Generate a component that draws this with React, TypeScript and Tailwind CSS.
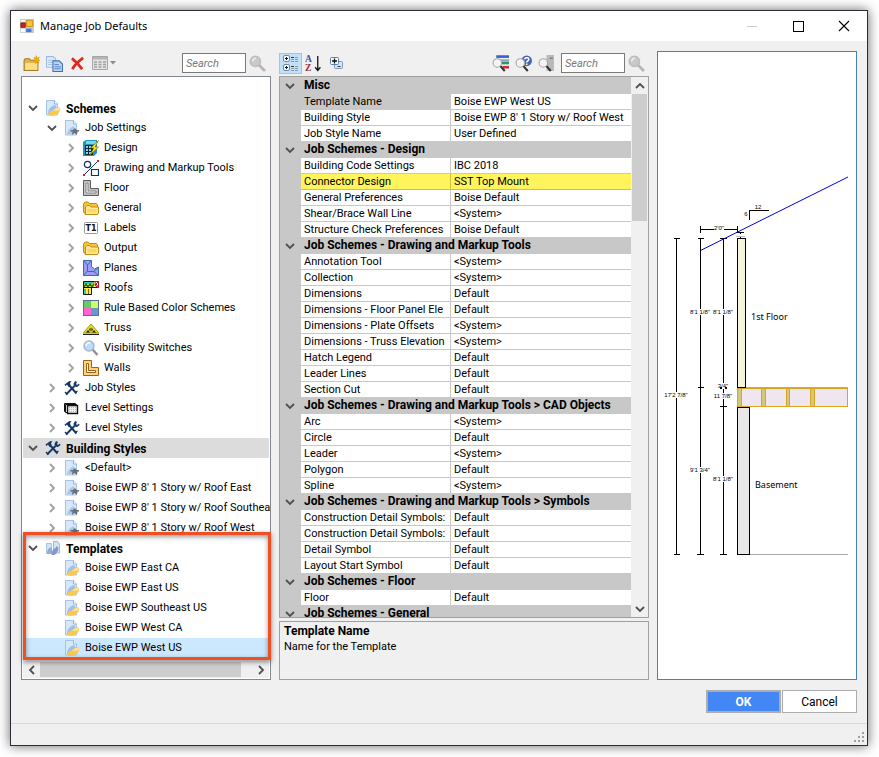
import { useState, type ReactNode } from "react";

type IconName =
  | "schemes"
  | "settings"
  | "design"
  | "drawing"
  | "floor"
  | "folder"
  | "labels"
  | "planes"
  | "roofs"
  | "colors"
  | "truss"
  | "lens"
  | "walls"
  | "tools"
  | "levels"
  | "templates";

interface TreeItem {
  label: string;
  icon: IconName;
  level: 0 | 1 | 2;
  state?: "open" | "closed";
}

const TREE: TreeItem[] = [
  { label: "Schemes", icon: "schemes", level: 0, state: "open" },
  { label: "Job Settings", icon: "settings", level: 1, state: "open" },
  { label: "Design", icon: "design", level: 2, state: "closed" },
  { label: "Drawing and Markup Tools", icon: "drawing", level: 2, state: "closed" },
  { label: "Floor", icon: "floor", level: 2, state: "closed" },
  { label: "General", icon: "folder", level: 2, state: "closed" },
  { label: "Labels", icon: "labels", level: 2, state: "closed" },
  { label: "Output", icon: "folder", level: 2, state: "closed" },
  { label: "Planes", icon: "planes", level: 2, state: "closed" },
  { label: "Roofs", icon: "roofs", level: 2, state: "closed" },
  { label: "Rule Based Color Schemes", icon: "colors", level: 2, state: "closed" },
  { label: "Truss", icon: "truss", level: 2, state: "closed" },
  { label: "Visibility Switches", icon: "lens", level: 2, state: "closed" },
  { label: "Walls", icon: "walls", level: 2, state: "closed" },
  { label: "Job Styles", icon: "tools", level: 1, state: "closed" },
  { label: "Level Settings", icon: "levels", level: 1, state: "closed" },
  { label: "Level Styles", icon: "tools", level: 1, state: "closed" },
  { label: "Building Styles", icon: "tools", level: 0, state: "open" },
  { label: "<Default>", icon: "settings", level: 1, state: "closed" },
  { label: "Boise EWP 8' 1 Story w/ Roof East", icon: "settings", level: 1, state: "closed" },
  { label: "Boise EWP 8' 1 Story w/ Roof Southea", icon: "settings", level: 1, state: "closed" },
  { label: "Boise EWP 8' 1 Story w/ Roof West", icon: "settings", level: 1, state: "closed" },
];

const TEMPLATES: TreeItem[] = [
  { label: "Templates", icon: "templates", level: 0, state: "open" },
  { label: "Boise EWP East CA", icon: "schemes", level: 1 },
  { label: "Boise EWP East US", icon: "schemes", level: 1 },
  { label: "Boise EWP Southeast US", icon: "schemes", level: 1 },
  { label: "Boise EWP West CA", icon: "schemes", level: 1 },
  { label: "Boise EWP West US", icon: "schemes", level: 1 },
];

const PROPERTIES: { title: string; rows: [string, string][] }[] = [
  {
    title: "Misc",
    rows: [
      ["Template Name", "Boise EWP West US"],
      ["Building Style", "Boise EWP 8' 1 Story w/ Roof West"],
      ["Job Style Name", "User Defined"],
    ],
  },
  {
    title: "Job Schemes - Design",
    rows: [
      ["Building Code Settings", "IBC 2018"],
      ["Connector Design", "SST Top Mount"],
      ["General Preferences", "Boise Default"],
      ["Shear/Brace Wall Line", "<System>"],
      ["Structure Check Preferences", "Boise Default"],
    ],
  },
  {
    title: "Job Schemes - Drawing and Markup Tools",
    rows: [
      ["Annotation Tool", "<System>"],
      ["Collection", "<System>"],
      ["Dimensions", "Default"],
      ["Dimensions - Floor Panel Ele", "Default"],
      ["Dimensions - Plate Offsets", "<System>"],
      ["Dimensions - Truss Elevation", "<System>"],
      ["Hatch Legend", "Default"],
      ["Leader Lines", "Default"],
      ["Section Cut", "Default"],
    ],
  },
  {
    title: "Job Schemes - Drawing and Markup Tools > CAD Objects",
    rows: [
      ["Arc", "<System>"],
      ["Circle", "Default"],
      ["Leader", "<System>"],
      ["Polygon", "Default"],
      ["Spline", "<System>"],
    ],
  },
  {
    title: "Job Schemes - Drawing and Markup Tools > Symbols",
    rows: [
      ["Construction Detail Symbols:", "Default"],
      ["Construction Detail Symbols:", "Default"],
      ["Detail Symbol", "Default"],
      ["Layout Start Symbol", "Default"],
    ],
  },
  { title: "Job Schemes - Floor", rows: [["Floor", "Default"]] },
  { title: "Job Schemes - General", rows: [] },
];

function Svg({ children, className = "size-4" }: { children: ReactNode; className?: string }) {
  return (
    <svg viewBox="0 0 16 16" className={`${className} shrink-0`} fill="none" aria-hidden="true">
      {children}
    </svg>
  );
}

function Chevron({ dir, className = "text-[#505050]" }: { dir: "down" | "up" | "left" | "right"; className?: string }) {
  const paths = {
    down: "M1 3l4 4 4-4",
    up: "M1 7l4-4 4 4",
    left: "M7 1 3 5l4 4",
    right: "M3 1l4 4-4 4",
  };
  return (
    <svg viewBox="0 0 10 10" className={`size-2.5 shrink-0 ${className}`} fill="none" aria-hidden="true">
      <path d={paths[dir]} stroke="currentColor" strokeWidth="1.8" />
    </svg>
  );
}

function Page() {
  return (
    <>
      <path d="M1.5.5h8l3 3.5v11h-11z" fill="#d6e8fa" stroke="#a5c3e6" />
      <path d="M9.500.5v3.500h3" fill="#fff" stroke="#8fb4df" />
    </>
  );
}

function TreeIcon({ name }: { name: IconName }) {
  switch (name) {
    case "schemes":
      return (
        <Svg>
          <Page />
          <path d="M3 14c0-5 3-8 7-9l2 3-6 7z" fill="#9dc0ee" />
          <path d="M3.500 15c0-3 2-4 4.500-4.500l2.500-2.500 4.500-.5c.5 2-.5 5-2.500 6.500L7 16z" fill="#fbc84a" />
          <path d="m8 11 3-2.800 4-.7-1 3z" fill="#fde0a4" />
        </Svg>
      );
    case "settings":
      return (
        <Svg>
          <Page />
          <path d="M3 14c1-5 4-6 6-8l2 2-2 6z" fill="#a9c9ee" />
          <path d="M6.500 10H9l1-1.500h1.500l1 1.500H15v1.500h-1.500l-.5 3.500-2.500-2-2.500 2 .5-3.500h-2z" fill="#6b7077" />
        </Svg>
      );
    case "design":
      return (
        <Svg>
          <path d="M0 2 3 0h11v13l-3 3H0z" fill="#2493b5" />
          <path d="M3 1h10v3H3z" fill="#6fd9ef" />
          <path d="M2 5h8v10H2z" fill="#12232d" />
          <path d="M3 6h2v2H3zm3 0h2v2H6zM3 9h2v2H3zm3 0h2v2H6zM3 12h2v2H3zm3 0h2v2H6z" fill="#8ccfe4" />
          <path d="M15.500.5 7.500 8H11l-4.500 7.500 9-8.500H12z" fill="#ffee00" stroke="#7c6a00" strokeWidth=".6" />
        </Svg>
      );
    case "drawing":
      return (
        <Svg>
          <circle cx="4.500" cy="4.500" r="3.200" stroke="#10365f" strokeWidth="1.200" />
          <path d="M8.500 9.500h7v6h-7z" stroke="#10365f" strokeWidth="1.200" />
          <path d="M1.500 14.500 14.500 1.500" stroke="#10365f" />
          <path d="M0 14h2v2H0zM14 0h2v2h-2z" fill="#d81e1e" />
        </Svg>
      );
    case "floor":
      return (
        <Svg>
          <path d="M.5.5h7v8h8v7H.5z" fill="#c4c4c4" stroke="#5c5c5c" />
          <path d="M3 3h2v8h8v2H3z" fill="#eee" stroke="#777" strokeWidth=".8" />
        </Svg>
      );
    case "folder":
      return (
        <Svg>
          <path d="M.5 12V4L2 2h3l1.500 1.500h7l1 1.500v9.500H2.500z" fill="#f7c33a" stroke="#c58a12" />
          <path d="M2.500 14.500V7L4 5.500h3L8 7h7.500v6L14 14.500z" fill="#ffeb99" stroke="#c58a12" />
          <path d="M4.500 9h9v3.500h-9z" fill="#fbd662" />
        </Svg>
      );
    case "labels":
      return (
        <svg viewBox="0 0 16 16" className="size-4 shrink-0" aria-hidden="true">
          <rect x="1.500" y="2.500" width="13" height="11" rx="1" fill="#fff" stroke="#9a9a9a" />
          <text x="8" y="11" textAnchor="middle" fontSize="8" fontWeight="700" fontFamily="DejaVu Sans, sans-serif" fill="#111">
            T1
          </text>
        </svg>
      );
    case "planes":
      return (
        <Svg>
          <path d="M.5.5h8v6l3 2.500 4-2v8.500H.5z" fill="#9a9cf6" stroke="#3a6ea5" />
          <path d="m1 1 3.500 4L8 1M4.500 5v6L1 15M4.500 11.500H11l4-4M11 11.500l4 3.500" stroke="#3a6ea5" />
        </Svg>
      );
    case "roofs":
      return (
        <Svg>
          <path d="M.5 1.500h15v6h-7v7h-8z" fill="#ffe94a" stroke="#111" />
          <path d="M1 2h10v2H1z" fill="#35c6b8" />
          <path d="m1 7 2-3 2 3 2-3 2 3 2-3" stroke="#14702a" strokeWidth="1.500" />
          <path d="M1 7.500h9" stroke="#111" />
          <path d="M11.500 1.500h4v6z" fill="#fff" stroke="#b3122a" />
          <path d="m15 2-3 3 3 3" stroke="#b3122a" />
          <path d="M1 9h2v5H1z" fill="#35c6b8" />
          <path d="M5.500 9v5" stroke="#8c6c00" />
        </Svg>
      );
    case "colors":
      return (
        <Svg>
          <path d="M0 0h16v16H0z" fill="#5c6c9c" />
          <path d="M1 1h7v7H1z" fill="#66cc66" />
          <path d="M8 1h7v7H8z" fill="#ccff66" />
          <path d="M1 8h7v7H1z" fill="#ff66cc" />
          <path d="M8 8h7v7H8z" fill="#6699cc" />
        </Svg>
      );
    case "truss":
      return (
        <Svg>
          <path d="M8 4 15.500 12.500H.5z" fill="#e8dc1e" stroke="#8d8600" strokeWidth=".8" />
          <path d="M0 12.500h16v2H0z" fill="#d6cc10" />
          <path d="M0 14.500h16" stroke="#222" />
          <path d="M3 12.500 5 10l2 2.500zM9 12.500l2-2.500 2 2.500zM6 9.500l1.500-2v4zM10 9.500l-1.500-2v4z" fill="#1c1c1c" />
        </Svg>
      );
    case "lens":
      return (
        <Svg>
          <path d="m9.500 9.500 5 5.500" stroke="#8d8d96" strokeWidth="2.400" />
          <circle cx="6" cy="6" r="5" fill="#b9dcfa" stroke="#a9b6cc" strokeWidth="1.500" />
          <path d="M3 6a3 3 0 0 1 4-3" stroke="#fff" strokeWidth="1.500" />
        </Svg>
      );
    case "walls":
      return (
        <Svg>
          <path d="M.5.5h8v7h7v8H.5z" fill="#ffd27a" stroke="#9a6420" />
          <path d="M3.500 3.500h2v7h7v2h-9z" fill="#fff" stroke="#9a6420" />
        </Svg>
      );
    case "tools":
      return (
        <Svg>
          <path d="m5 5 7.500 8.500M10.500 6 2 14.500" stroke="#123764" strokeWidth="1.900" />
          <path d="M.5 4.500 5.500 1l2 .5L6 3l.5 2L4.500 7 3 4.500 1.500 6z" fill="#123764" />
          <path d="M11 1 9.500 4l1 2.500 2.500.5 2.500-2-.5-1.500L13 5l-1-1 1-2z" fill="#123764" />
          <path d="m11 12.500 2.500-1.500M1 12l2.500 2.500" stroke="#123764" strokeWidth="1.400" />
        </Svg>
      );
    case "levels":
      return (
        <Svg>
          <path d="M.5 3.500h11v8H.5z" fill="#fff" stroke="#111" />
          <path d="M1.500 4.500h11v8h-11z" fill="#fff" stroke="#111" />
          <path d="M3.500 5.500h10v8h-10z" fill="#eee" stroke="#111" strokeWidth="1.400" />
          <path d="M5 7.500h7M5 9.500h7M5 11.500h7" stroke="#bbb" strokeDasharray="1 1" />
        </Svg>
      );
    case "templates":
      return (
        <Svg>
          <path d="M1.500 3.500h5v10h-5z" fill="#d3e4f7" stroke="#a9c3e4" />
          <path d="M8.500 1.500h4L14.500 4v9h-6z" fill="#d3e4f7" stroke="#9db9e0" />
          <path d="M2 14c0-4 1.500-6 3.500-7l1.500 2v4.500z" fill="#93abd9" />
          <path d="M6.500 15c0-4 1.500-6 4-7l1-2 2 2-1 4-3 3z" fill="#8199cb" />
        </Svg>
      );
  }
}

function TreeRow({ item, tone = "", onSelect }: { item: TreeItem; tone?: string; onSelect?: () => void }) {
  const indent = ["pl-[5px]", "pl-6", "pl-[43px]"][item.level];
  return (
    <li
      role="treeitem"
      aria-expanded={item.state ? item.state === "open" : undefined}
      onClick={onSelect}
      className={`flex h-5 cursor-default items-center ${indent} ${tone}`}
    >
      <span className="mr-[7px] flex w-2.5 shrink-0">
        {item.state === "open" && <Chevron dir="down" />}
        {item.state === "closed" && <Chevron dir="right" className="text-[#a0a0a0]" />}
      </span>
      <TreeIcon name={item.icon} />
      <span className={`ml-[5px] pt-px whitespace-nowrap ${item.level === 0 ? "text-[12px] font-bold" : ""}`}>
        {item.label}
      </span>
    </li>
  );
}

function SearchBox({ label }: { label: string }) {
  return (
    <div className="flex items-center gap-[3px]">
      <input
        type="text"
        aria-label={label}
        placeholder="Search"
        className="h-5 w-16 border border-[#7a7a7a] bg-white px-[3px] text-[11px] italic outline-none placeholder:text-[#777]"
      />
      <button aria-label={`Run ${label}`} className="flex">
        <Svg className="size-[17px]">
          <path d="m9.500 9.500 5.500 5.500" stroke="#b4b4b4" strokeWidth="2.500" />
          <circle cx="6" cy="6" r="4.800" fill="#c9c9c9" stroke="#bdbdbd" strokeWidth="1.500" />
          <path d="M3.500 6a3 3 0 0 1 3-3" stroke="#eee" strokeWidth="1.400" />
        </Svg>
      </button>
    </div>
  );
}

function LensOver({ children }: { children: ReactNode }) {
  return (
    <Svg className="size-[17px]">
      {children}
      <circle cx="5" cy="7.500" r="4" fill="#f4f4f4" stroke="#a3a3a3" />
      <path d="m8 10.500 4 4.500" stroke="#333" strokeWidth="2" />
    </Svg>
  );
}

function TreePanel() {
  const [selected, setSelected] = useState("Boise EWP West US");
  return (
    <section className="flex w-[250px] shrink-0 flex-col">
      <div className="flex h-[25px] items-center pb-px pl-0.5">
        <button aria-label="New scheme" className="mr-1.5 flex">
          <Svg className="size-[17px]">
            <path d="M1 14.500V5l1-1.500h4L7.500 5H14v9.500z" fill="#e0b446" stroke="#a57c22" />
            <path d="M2 7.500h11.500V14H2z" fill="#fbe08a" />
            <path d="M10.500 2 12 3l.5-2.500L13 3l2.500-1L14 4l2 1-2 .5 1 2-2-1-1 1.500V5.500L9.500 5l1.500-1z" fill="#f6b400" stroke="#d98f00" strokeWidth=".5" />
          </Svg>
        </button>
        <button aria-label="Copy scheme" className="mr-[7px] flex">
          <Svg className="size-[17px]">
            <path d="M.5 1.500h6l2.500 2v8H.5z" fill="#e3eefb" stroke="#9dbbe2" />
            <path d="M2 5h5M2 7h5M2 9h4" stroke="#a9c3e6" />
            <path d="M6.500 5.500h6l3 3v7h-9z" fill="#b9d3f3" stroke="#4470b8" />
            <path d="M8 9h4M8 11h6M8 13h6" stroke="#5f88c8" />
          </Svg>
        </button>
        <button aria-label="Delete scheme" className="mr-[7px] flex">
          <Svg className="size-[15px]">
            <path d="M2 2.500c4 3 8 7 11 11.500M14 2C10 5 5 9 2.500 14" stroke="#e0281c" strokeWidth="2.900" />
          </Svg>
        </button>
        <button aria-label="View options" className="flex items-center gap-0.5">
          <Svg>
            <path d="M.5 1.500h15v13H.5z" fill="#e4e4e4" stroke="#a6a6a6" />
            <path d="M1 2h14v2.500H1z" fill="#b5b5b5" />
            <path d="M2 7h3m1.500 0h3M11 7h3M2 9.500h3m1.500 0h3m1.500 0h3M2 12h3m1.500 0h3m1.500 0h3" stroke="#a0a0a0" strokeWidth="1.300" />
          </Svg>
          <svg viewBox="0 0 6 4" className="h-1 w-1.5" aria-hidden="true">
            <path d="M0 0h6L3 3.500z" fill="#8c8c8c" />
          </svg>
        </button>
        <div className="mr-[5px] ml-auto">
          <SearchBox label="search schemes" />
        </div>
      </div>

      <div className="flex flex-1 flex-col border border-[#828790] bg-white px-px pt-[21px] pb-px">
        <ul role="tree" aria-label="Schemes">
          {TREE.map((item) => (
            <TreeRow key={item.label} item={item} tone={item.label === "Building Styles" ? "bg-[#dcdcdc]" : ""} />
          ))}
        </ul>
        <div className="relative">
          <ul role="tree" aria-label="Templates">
            {TEMPLATES.map((item) => (
              <TreeRow
                key={item.label}
                item={item}
                tone={item.label === selected ? "bg-[#cce8ff]" : ""}
                onSelect={() => setSelected(item.label)}
              />
            ))}
          </ul>
          {/* callout around the template group */}
          <div className="pointer-events-none absolute -top-1.5 -right-0.5 -bottom-0.5 left-0 border-3 border-[#f04e23] shadow-[0_2px_5px_rgba(0,0,0,0.45),inset_0_2px_5px_rgba(0,0,0,0.4)]" />
        </div>
        <div className="mt-auto flex h-[17px] items-center bg-[#f0f0f0]">
          <button aria-label="Scroll left" className="flex w-[17px] justify-center">
            <Chevron dir="left" />
          </button>
          <div className="flex h-full flex-1">
            <div className="h-[15px] w-[95%] self-center bg-[#cdcdcd]" />
          </div>
          <button aria-label="Scroll right" className="flex w-[17px] justify-center">
            <Chevron dir="right" />
          </button>
        </div>
      </div>
    </section>
  );
}

function PropertyRow({ name, value }: { name: string; value: string }) {
  const marked = name === "Connector Design";
  const active = name === "Template Name";
  const line = marked ? "border-[#cfc436] bg-[#fff45c]" : "border-[#c8c8c8]";
  return (
    <tr className="h-4 leading-[14px]">
      <td className="bg-[#c8c8c8] p-0" />
      <th
        scope="row"
        className={`border-r border-b p-0 pt-px pl-[3px] text-left font-normal whitespace-nowrap ${line} ${active ? "bg-[#c8c8c8]" : ""}`}
      >
        {name}
      </th>
      <td className={`border-b p-0 pt-px pl-[3px] whitespace-nowrap ${line}`}>{value}</td>
    </tr>
  );
}

function PropertyPanel() {
  return (
    <section className="flex min-w-0 flex-1 flex-col">
      <div className="flex h-[25px] items-center pb-px">
        <button
          aria-label="Categorized"
          aria-pressed="true"
          className="mr-[3px] flex h-[21px] w-[23px] items-center justify-center border border-[#90c8f6] bg-[#c2e0f7]"
        >
          <Svg>
            <rect x=".5" y=".5" width="6" height="6" rx="1.500" fill="#fff" stroke="#6688aa" />
            <rect x=".5" y="9.500" width="6" height="6" rx="1.500" fill="#fff" stroke="#6688aa" />
            <path d="M2 3.500h3M3.500 2v3M2 12.500h3M3.500 11v3" stroke="#111" />
            <path d="M8 2.500h3M8 11.500h3" stroke="#333" />
            <path d="M8 4.500h3M8 6.500h3M8 13.500h3M8 15.500h3M12 2.500h3M12 4.500h3M12 6.500h3M12 11.500h3M12 13.500h3M12 15.500h3" stroke="#8a9aaa" />
          </Svg>
        </button>
        <button aria-label="Alphabetical" className="mr-[7px] flex">
          <svg viewBox="0 0 16 16" className="size-[17px]" fill="none" aria-hidden="true">
            <text x="0" y="7" fontSize="9" fontWeight="700" fontFamily="Liberation Serif, serif" fill="#2f55a8">
              A
            </text>
            <text x="0" y="15" fontSize="9" fontWeight="700" fontFamily="Liberation Serif, serif" fill="#a32b2b">
              Z
            </text>
            <path d="M12 1v13M9.500 11.500 12 14.500l2.500-3" stroke="#111" strokeWidth="1.200" />
          </svg>
        </button>
        <button aria-label="Expand all" className="flex">
          <Svg>
            <rect x="5.500" y="6.500" width="8" height="7" rx="1" fill="#d8e6f5" stroke="#7a97b8" />
            <rect x="1.500" y="2.500" width="8" height="7" rx="1" fill="#f5faff" stroke="#5c7fa8" />
            <path d="M3 6h5M5.500 3.500v5" stroke="#111" strokeWidth="1.300" />
            <path d="M8.500 11.500h3" stroke="#333" />
          </Svg>
        </button>
        <div className="mr-1 ml-auto flex items-center gap-1.5">
          <button aria-label="Find in list" className="flex">
            <LensOver>
              <path d="M4 1.500h12" stroke="#3b62c8" strokeWidth="2.500" />
              <path d="M8 5h8" stroke="#8fa4d8" strokeWidth="2" />
              <path d="M9 7.500h7" stroke="#2f9a57" strokeWidth="2.500" />
              <path d="M10 11.500h6" stroke="#c83232" strokeWidth="2.500" />
            </LensOver>
          </button>
          <button aria-label="Find usage" className="flex">
            <LensOver>
              <circle cx="11" cy="5.500" r="5" fill="#4864b4" />
              <path d="M9 4c.5-2 4-2 4 0 0 1.500-2 1.500-2 3M11 8v1.300" stroke="#fff" strokeWidth="1.400" />
            </LensOver>
          </button>
          <button aria-label="Find on page" className="flex">
            <LensOver>
              <path d="M8 0h7v15H8z" fill="#b9b9b9" />
              <path d="M11 3h3" stroke="#666" />
            </LensOver>
          </button>
          <SearchBox label="search properties" />
        </div>
      </div>

      <div className="flex min-h-0 flex-1 basis-0 overflow-hidden border border-[#a0a0a0] bg-[#f0f0f0]">
        <div className="min-w-0 flex-1 basis-0 overflow-hidden bg-[#c8c8c8] pt-px">
          <table className="w-full table-fixed border-separate border-spacing-0 bg-white leading-[15px]">
            <colgroup>
              <col className="w-[21px]" />
              <col className="w-[150px]" />
              <col />
            </colgroup>
            {PROPERTIES.map((group) => (
              <tbody key={group.title}>
                <tr className="h-4 bg-[#c8c8c8]">
                  <td className="p-0">
                    <Chevron dir="down" className="ml-[5px] text-[#505050]" />
                  </td>
                  <th colSpan={2} scope="colgroup" className="p-0 pb-px pl-[3px] text-left text-[12px] font-bold whitespace-nowrap">
                    {group.title}
                  </th>
                </tr>
                {group.rows.map(([name, value], i) => (
                  <PropertyRow key={i} name={name} value={value} />
                ))}
              </tbody>
            ))}
          </table>
        </div>
        <div className="flex w-[17px] flex-col items-center">
          <button aria-label="Scroll up" className="flex h-[17px] items-center">
            <Chevron dir="up" />
          </button>
          <div className="flex w-full flex-1 pl-px">
            <div className="h-1/4 w-[15px] bg-[#cdcdcd]" />
          </div>
          <button aria-label="Scroll down" className="flex h-[17px] items-center">
            <Chevron dir="down" />
          </button>
        </div>
      </div>

      <div className="mt-[3px] h-[59px] border border-[#a0a0a0] px-1 py-0.5 leading-[15px]">
        <p className="text-[12px] font-bold">Template Name</p>
        <p>Name for the Template</p>
      </div>
    </section>
  );
}

const DIMENSIONS = [
  { x: 18, y: 343, text: "17'2 7/8\"" },
  { x: 42, y: 260, text: "8'1 1/8\"" },
  { x: 65, y: 260, text: "8'1 1/8\"" },
  { x: 65, y: 334, text: "3/4\"" },
  { x: 65, y: 344, text: "11 7/8\"" },
  { x: 42, y: 418, text: "9'1 3/4\"" },
  { x: 65, y: 427, text: "8'1 1/8\"" },
];

function SectionPreview() {
  return (
    <section className="w-[200px] shrink-0 border border-[#4682b4] bg-white">
      <svg
        viewBox="0 0 198 627"
        className="w-full"
        fill="none"
        fontFamily="Liberation Sans, sans-serif"
        role="img"
        aria-label="Building section"
      >
        {/* dimension strings */}
        <g stroke="#000" shapeRendering="crispEdges">
          <path d="M18.500 186.500v316M42.500 186.500v316M65.500 186.500v316" />
          <path d="M16 186.500h6M40 186.500h6M62 186.500h7M16 502.500h6M39 502.500h7M62 502.500h7M40 335.500h6M62 335.500h7M62 336.500h7M62 354.500h7" />
          <path d="M42.500 177.500h37M42.500 174v7M79.500 174v7M91.500 168v-9.500h19" />
          <path d="M79 180.500h7M82.500 180v2M82.500 185v2" />
        </g>
        <path d="M78 184.500h9" stroke="#bbb" />
        {DIMENSIONS.map((d) => (
          <g key={`${d.x}-${d.y}`}>
            <path d={`M${d.x - 1} ${d.y - 3}h3v6h-3z`} fill="#fff" />
            <text x={d.x} y={d.y + 2} textAnchor="middle" fontSize="6" fill="#000">
              {d.text}
            </text>
          </g>
        ))}
        <path d="M56 176h10v3H56z" fill="#fff" />
        <g fontSize="6" fill="#000" textAnchor="middle">
          <text x="61" y="178">2'0"</text>
          <text x="100" y="157">12</text>
          <text x="88" y="164">6</text>
        </g>
        <path d="M42.500 198.500 190 125" stroke="#0000e0" />
        <g shapeRendering="crispEdges">
          <path d="M79.500 186.500h8v149h-8z" fill="#f5f5dc" stroke="#000" />
          <path d="M79.500 355.500h12v147h-12z" fill="#e8e8e8" stroke="#000" />
          <path d="M92 502.500h98M88 335.500h102" stroke="#a9a9a9" />
          <path d="M79.500 336.500h110v18h-110z" fill="#f0e6f0" stroke="#daa520" />
          <path
            d="M79.500 336.500h4v18h-4zM103.500 336.500h4v18h-4zM128.500 336.500h3v18h-3zM152.500 336.500h4v18h-4z"
            fill="#d2c878"
            stroke="#daa520"
          />
        </g>
        <g fontFamily="Noto Sans, sans-serif" fontSize="9" fill="#000">
          <text x="93" y="268">
            1st Floor
          </text>
          <text x="97" y="436">
            Basement
          </text>
        </g>
      </svg>
    </section>
  );
}

function TitleBar() {
  return (
    <header className="flex h-[30px] items-center bg-white pr-[17px] pl-[9px] text-[12px]">
      <Svg className="size-3.5">
        <path d="M0 0h16v16H0z" fill="#c9c9c9" />
        <path d="M1 4.500h5v5H1z" fill="#c22a1c" stroke="#8d1a10" />
        <path d="M7.500 1.500h7v7h-7z" fill="#fbc530" stroke="#c98a0c" />
        <path d="M7 11h6v4H7z" fill="#3c7ae0" />
        <path d="M1 11h5v4H1zM1 1h5v2H1z" fill="#fff" />
      </Svg>
      <h1 className="ml-1.5 font-['Noto_Sans',sans-serif] text-[11px]">Manage Job Defaults</h1>
      <div className="ml-auto flex items-center gap-[34px]">
        <button aria-label="Minimize" className="flex h-3 w-3 items-center">
          <span className="h-px w-2.5 bg-[#ccc]" />
        </button>
        <button aria-label="Maximize" className="size-[11px] border border-black" />
        <button aria-label="Close" className="flex">
          <svg viewBox="0 0 12 12" className="size-3" aria-hidden="true">
            <path d="m1 1 10 10M11 1 1 11" stroke="#000" strokeWidth="1.100" />
          </svg>
        </button>
      </div>
    </header>
  );
}

export default function App() {
  return (
    <main className="flex min-h-screen flex-col bg-white pt-2.5 pr-[11px] pb-[11px] pl-2.5 font-['Roboto','Liberation_Sans',sans-serif] text-[11px] text-black">
      <div className="flex flex-1 flex-col border border-[#2b2b3a] bg-[#f0f0f0] shadow-[0_0_11px_rgba(0,0,0,0.6)]">
        <TitleBar />
        <div className="flex flex-1 gap-2 px-2.5 pt-2.5">
          <TreePanel />
          <PropertyPanel />
          <SectionPreview />
        </div>
        <div className="flex justify-end gap-px px-2.5 py-2.5 text-[12px]">
          <button className="h-[23px] w-[75px] border-2 border-[#adadad] bg-[#4287f5] font-bold text-white">OK</button>
          <button className="h-[23px] w-[75px] border border-[#adadad] bg-white">Cancel</button>
        </div>
        <footer className="flex h-[22px] items-end justify-end border-t border-[#d7d7d7] p-0.5">
          <svg viewBox="0 0 11 11" className="size-[11px]" fill="#a0a0a0" aria-hidden="true">
            <path d="M8 0h2v2H8zM4 4h2v2H4zM8 4h2v2H8zM0 8h2v2H0zM4 8h2v2H4zM8 8h2v2H8z" />
          </svg>
        </footer>
      </div>
    </main>
  );
}
